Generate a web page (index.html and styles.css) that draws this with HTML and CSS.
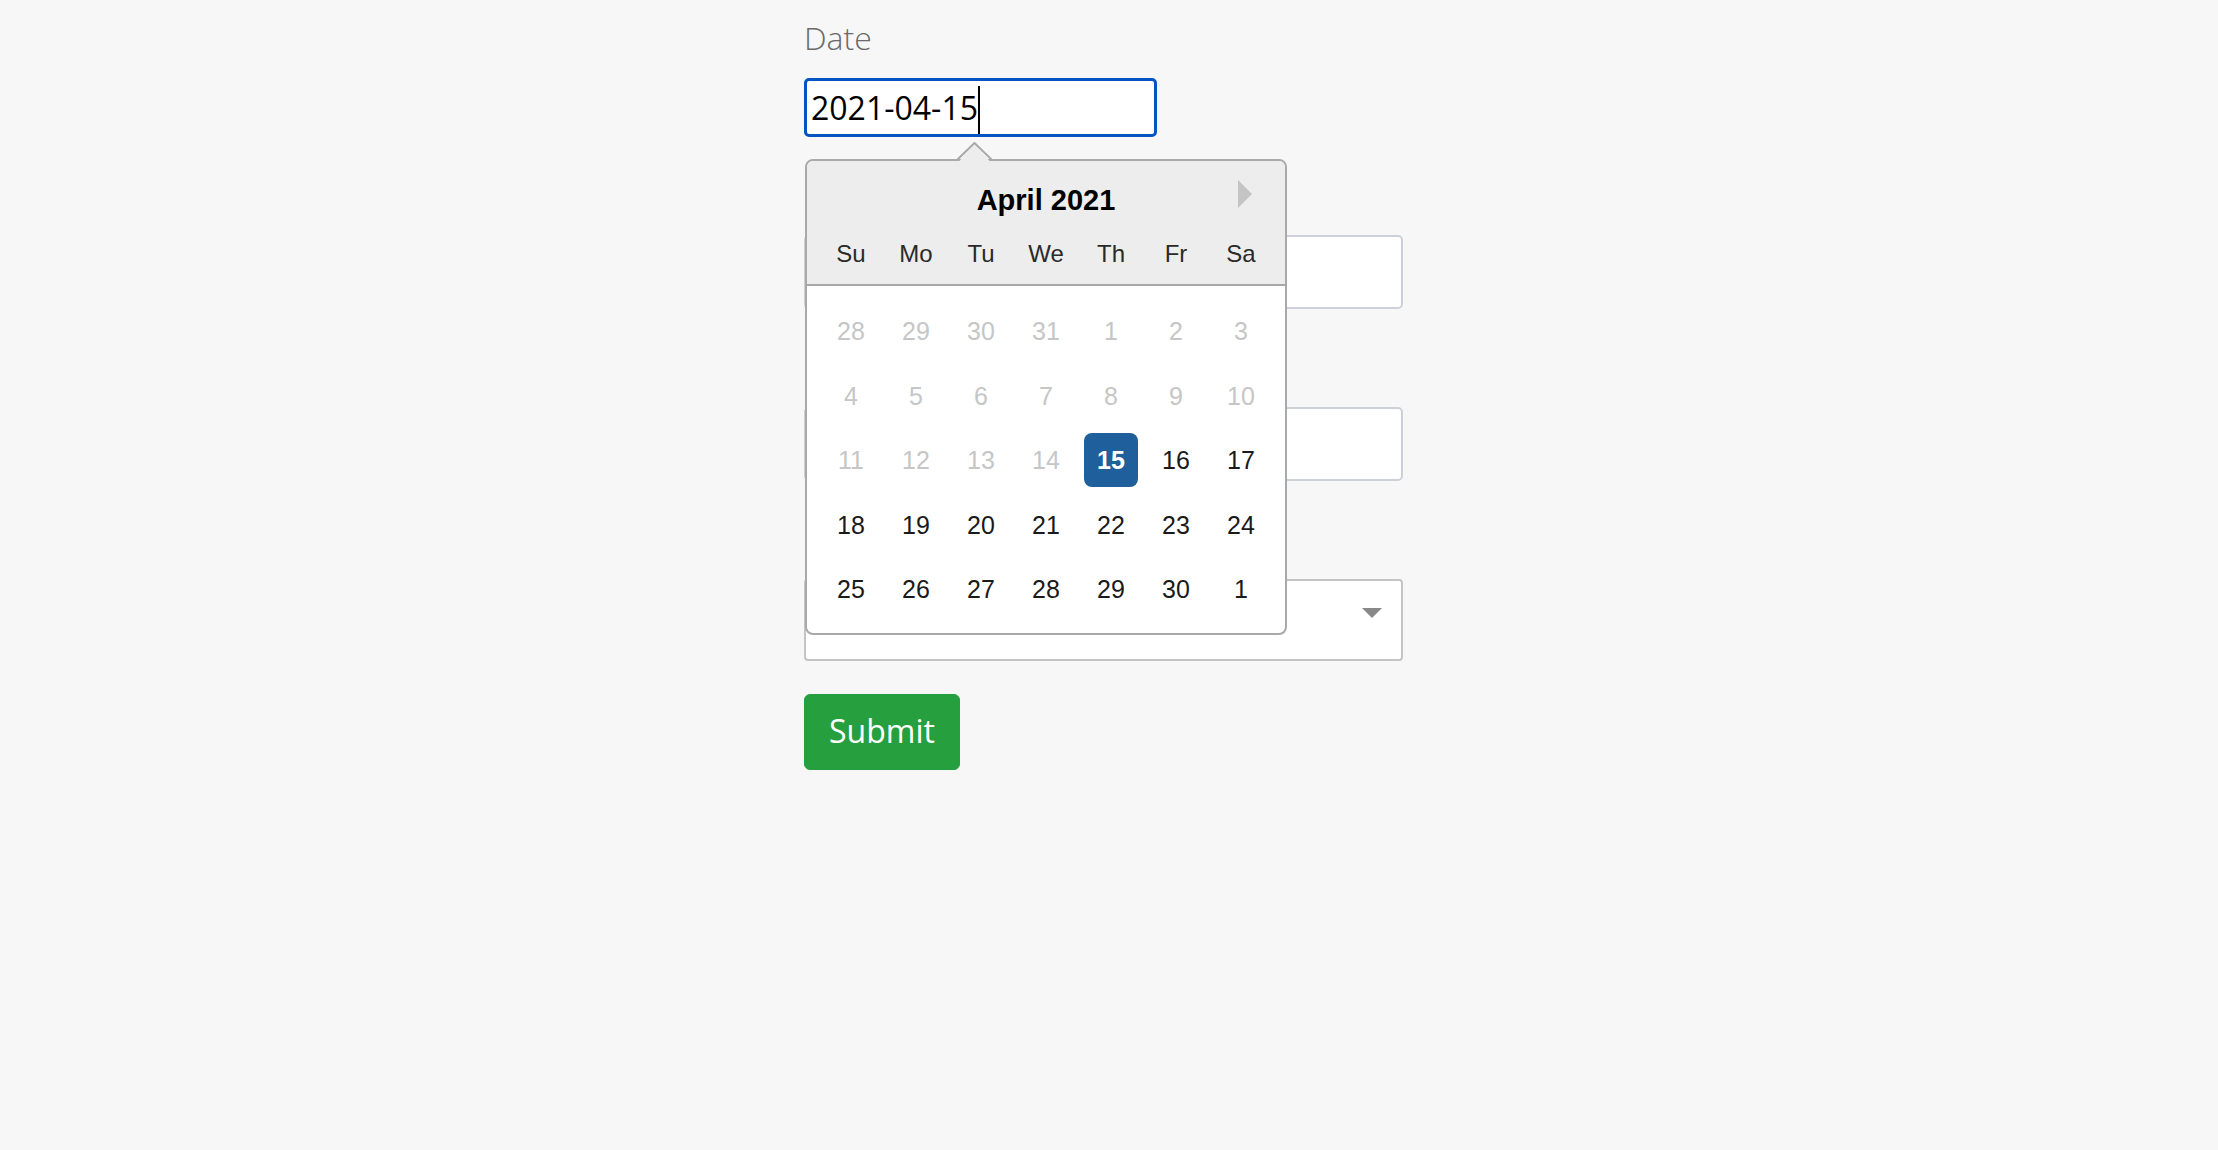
FILE: index.html
```html
<!DOCTYPE html>
<html lang="en">
<head>
<meta charset="utf-8">
<title>Date form</title>
<link rel="stylesheet" href="styles.css">
</head>
<body>
<main class="page">
  <form class="form">
    <div class="field">
      <label class="label">Date</label>
      <div class="date-wrap">
        <div class="input input-date"><span class="value">2021-04-15</span><span class="caret"></span></div>
        <div class="dp">
          <svg class="dp-pointer" width="36" height="20" viewBox="0 0 36 20">
            <polygon points="1.5,20 17.5,2.5 33.5,20" fill="#ededed"/>
            <polyline points="0,18 17.5,1 35,18" fill="none" stroke="#a9a9a9" stroke-width="2"/>
          </svg>
          <div class="dp-head">
            <div class="dp-title-row">
              <span></span>
              <span class="dp-title">April 2021</span>
              <svg class="dp-next" width="14" height="28" viewBox="0 0 14 28"><polygon points="0,0 14,14 0,28" fill="#c4c4c4"/></svg>
            </div>
            <div class="dp-weekdays">
              <span>Su</span><span>Mo</span><span>Tu</span><span>We</span><span>Th</span><span>Fr</span><span>Sa</span>
            </div>
          </div>
          <div class="dp-days">
            <span class="day muted">28</span><span class="day muted">29</span><span class="day muted">30</span><span class="day muted">31</span><span class="day muted">1</span><span class="day muted">2</span><span class="day muted">3</span>
            <span class="day muted">4</span><span class="day muted">5</span><span class="day muted">6</span><span class="day muted">7</span><span class="day muted">8</span><span class="day muted">9</span><span class="day muted">10</span>
            <span class="day muted">11</span><span class="day muted">12</span><span class="day muted">13</span><span class="day muted">14</span><span class="day"><span class="selected">15</span></span><span class="day">16</span><span class="day">17</span>
            <span class="day">18</span><span class="day">19</span><span class="day">20</span><span class="day">21</span><span class="day">22</span><span class="day">23</span><span class="day">24</span>
            <span class="day">25</span><span class="day">26</span><span class="day">27</span><span class="day">28</span><span class="day">29</span><span class="day">30</span><span class="day">1</span>
          </div>
        </div>
      </div>
    </div>
    <div class="field">
      <label class="label label-hidden"></label>
      <div class="input input-text"></div>
    </div>
    <div class="field">
      <label class="label label-hidden"></label>
      <div class="input input-text"></div>
    </div>
    <div class="field">
      <label class="label label-hidden"></label>
      <div class="input input-select">
        <svg class="select-arrow" width="20" height="10" viewBox="0 0 20 10"><polygon points="0,0 20,0 10,10" fill="#888888"/></svg>
      </div>
    </div>
    <button type="button" class="btn">Submit</button>
  </form>
</main>
</body>
</html>
```
FILE: styles.css
```css
html, body {
  margin: 0;
  padding: 0;
  background: #f7f7f7;
}

.page {
  padding: 16px 0 0 804px;
  font-family: "Open Sans", "Liberation Sans", sans-serif;
}

.form {
  width: 599px;
  display: flex;
  flex-direction: column;
}

.field {
  display: flex;
  flex-direction: column;
  margin-bottom: 36px;
}

.field:nth-last-of-type(1) {
  margin-bottom: 0;
}

.label {
  font-size: 32px;
  line-height: 44px;
  font-weight: 300;
  color: #6a6a6a;
  margin-bottom: 18px;
}

.label-hidden {
  height: 44px;
}

.date-wrap {
  position: relative;
}

.input {
  box-sizing: border-box;
  background: #ffffff;
}

.input-date {
  width: 353px;
  height: 59px;
  border: 3px solid #0454c4;
  border-radius: 5px;
  padding: 0 4px;
  display: flex;
  align-items: center;
  font-size: 32px;
  line-height: 44px;
  color: #000000;
}

.caret {
  display: inline-block;
  width: 2px;
  height: 48px;
  margin-top: 4px;
  background: #000000;
}

.input-text {
  height: 74px;
  border: 2px solid #ccd0d8;
  border-radius: 5px;
}

.input-select {
  height: 82px;
  border: 2px solid #c4c4c4;
  border-radius: 4px;
  display: flex;
  justify-content: flex-end;
  align-items: flex-start;
}

.select-arrow {
  margin: 27px 19px 0 0;
}

.btn {
  align-self: flex-start;
  margin-top: 33px;
  background: #269f3f;
  border: 1px solid #269f3f;
  border-radius: 6px;
  color: #ffffff;
  font-family: "Open Sans", "Liberation Sans", sans-serif;
  font-size: 32px;
  line-height: 44px;
  padding: 14px 24px 16px;
  cursor: pointer;
}

/* Datepicker */
.dp {
  position: absolute;
  left: 1px;
  top: 81px;
  box-sizing: border-box;
  width: 482px;
  height: 476px;
  border: 2px solid #a9a9a9;
  border-radius: 8px;
  background: #ffffff;
  font-family: "Liberation Sans", Arial, Helvetica, sans-serif;
  z-index: 5;
}

.dp-pointer {
  position: absolute;
  left: 150px;
  top: -19px;
}

.dp-head {
  box-sizing: border-box;
  height: 125px;
  background: #ededed;
  border-bottom: 2px solid #a9a9a9;
  border-radius: 6px 6px 0 0;
  padding: 22px 11.5px 0;
}

.dp-title-row {
  display: grid;
  grid-template-columns: 1fr auto 1fr;
  height: 34px;
}

.dp-title {
  font-weight: 700;
  font-size: 29px;
  line-height: 34px;
  color: #000000;
}

.dp-next {
  justify-self: end;
  align-self: start;
  margin-top: -3px;
  margin-right: 21.5px;
}

.dp-weekdays {
  display: grid;
  grid-template-columns: repeat(7, 65px);
  margin-top: 22px;
  font-size: 24px;
  line-height: 30px;
  color: #2a2a2a;
  text-align: center;
}

.dp-days {
  display: grid;
  grid-template-columns: repeat(7, 65px);
  grid-auto-rows: 64.5px;
  padding: 12.75px 11.5px;
  font-size: 25px;
  color: #1a1a1a;
}

.day {
  display: flex;
  align-items: center;
  justify-content: center;
  line-height: 30px;
}

.day.muted {
  color: #c6c6c6;
}

.selected {
  display: flex;
  align-items: center;
  justify-content: center;
  width: 54px;
  height: 54px;
  border-radius: 8px;
  background: #1f5f9b;
  color: #ffffff;
  font-weight: 700;
}
```
